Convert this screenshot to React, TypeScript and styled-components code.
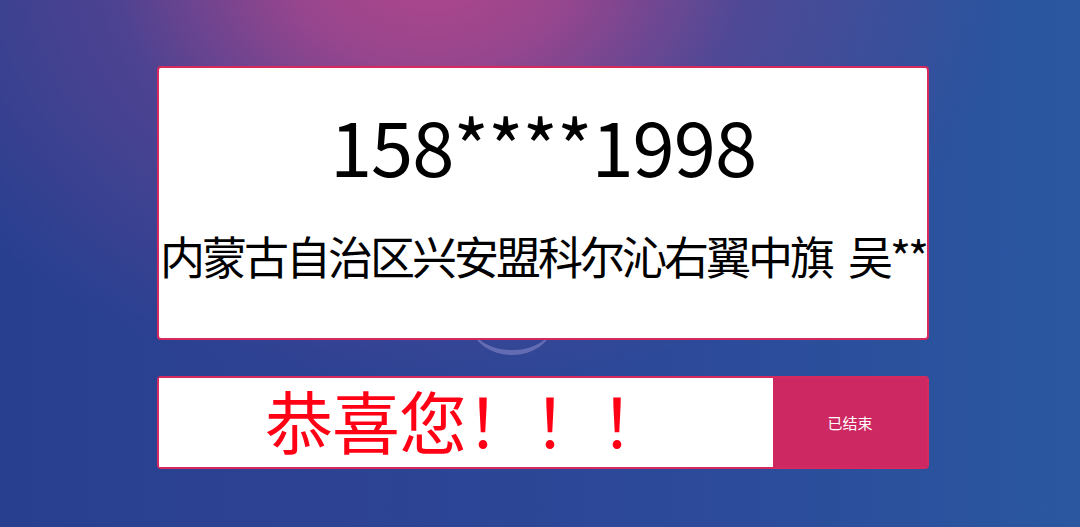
import styled, { createGlobalStyle } from 'styled-components';

const GlobalStyle = createGlobalStyle`
  html, body {
    margin: 0;
    padding: 0;
  }
  body {
    font-family: "Noto Sans CJK SC", "Noto Sans", sans-serif;
  }
`;

const Page = styled.div`
  position: relative;
  width: 1080px;
  height: 527px;
  overflow: hidden;
  display: flex;
  flex-direction: column;
  align-items: center;
  padding: 66px 0 0 6px;
  box-sizing: border-box;
  gap: 36px;
  background:
    radial-gradient(ellipse 580px 430px at 430px -40px, rgba(180, 70, 140, 1) 0%, rgba(168, 70, 140, 0.85) 25%, rgba(120, 70, 145, 0.45) 55%, rgba(80, 70, 150, 0) 100%),
    linear-gradient(90deg, #283f90 0%, #2d4293 30%, #2c4a99 65%, #2a57a0 100%);
`;

const Arc = styled.div`
  position: absolute;
  left: 472px;
  top: 296px;
  width: 80px;
  height: 54px;
  border-bottom: 5px solid rgba(190, 180, 235, 0.35);
  border-radius: 50%;
  pointer-events: none;
`;

const InfoCard = styled.div`
  position: relative;
  z-index: 1;
  width: 772px;
  height: 274px;
  box-sizing: border-box;
  background: #fff;
  border: 2px solid #d62a5e;
  border-radius: 4px;
  display: flex;
  flex-direction: column;
  align-items: center;
  padding-top: 34px;
  color: #000;
`;

const Phone = styled.div`
  font-family: "Noto Sans CJK SC", sans-serif;
  font-size: 76px;
  line-height: 84px;
  letter-spacing: -1px;
`;

const Address = styled.div`
  margin-top: 44px;
  font-family: "Noto Sans CJK SC", sans-serif;
  font-size: 45px;
  line-height: 52px;
  white-space: nowrap;
  letter-spacing: -3px;
`;

const Gap = styled.span`
  display: inline-block;
  width: 16px;
`;

const ResultBar = styled.div`
  width: 772px;
  height: 93px;
  box-sizing: border-box;
  border: 2px solid #d62a5e;
  border-radius: 4px;
  display: flex;
`;

const Greeting = styled.div`
  flex: 1;
  background: #fff;
  display: flex;
  align-items: center;
  justify-content: center;
  color: #ff0015;
  font-family: "Noto Sans CJK SC", sans-serif;
  font-size: 68px;
  line-height: 80px;
  letter-spacing: -1px;
  padding-bottom: 6px;
`;

const StatusButton = styled.button`
  width: 154px;
  border: none;
  border-radius: 0 2px 2px 0;
  background: #cd2862;
  color: #fff;
  font-family: "Noto Sans CJK SC", sans-serif;
  font-size: 15px;
  cursor: default;
`;

const App = () => {
  return (
    <>
      <GlobalStyle />
      <Page>
        <Arc />
        <InfoCard>
          <Phone>158****1998</Phone>
          <Address>
            内蒙古自治区兴安盟科尔沁右翼中旗<Gap />吴**
          </Address>
        </InfoCard>
        <ResultBar>
          <Greeting>恭喜您！！！</Greeting>
          <StatusButton disabled>已结束</StatusButton>
        </ResultBar>
      </Page>
    </>
  );
};

export default App;
